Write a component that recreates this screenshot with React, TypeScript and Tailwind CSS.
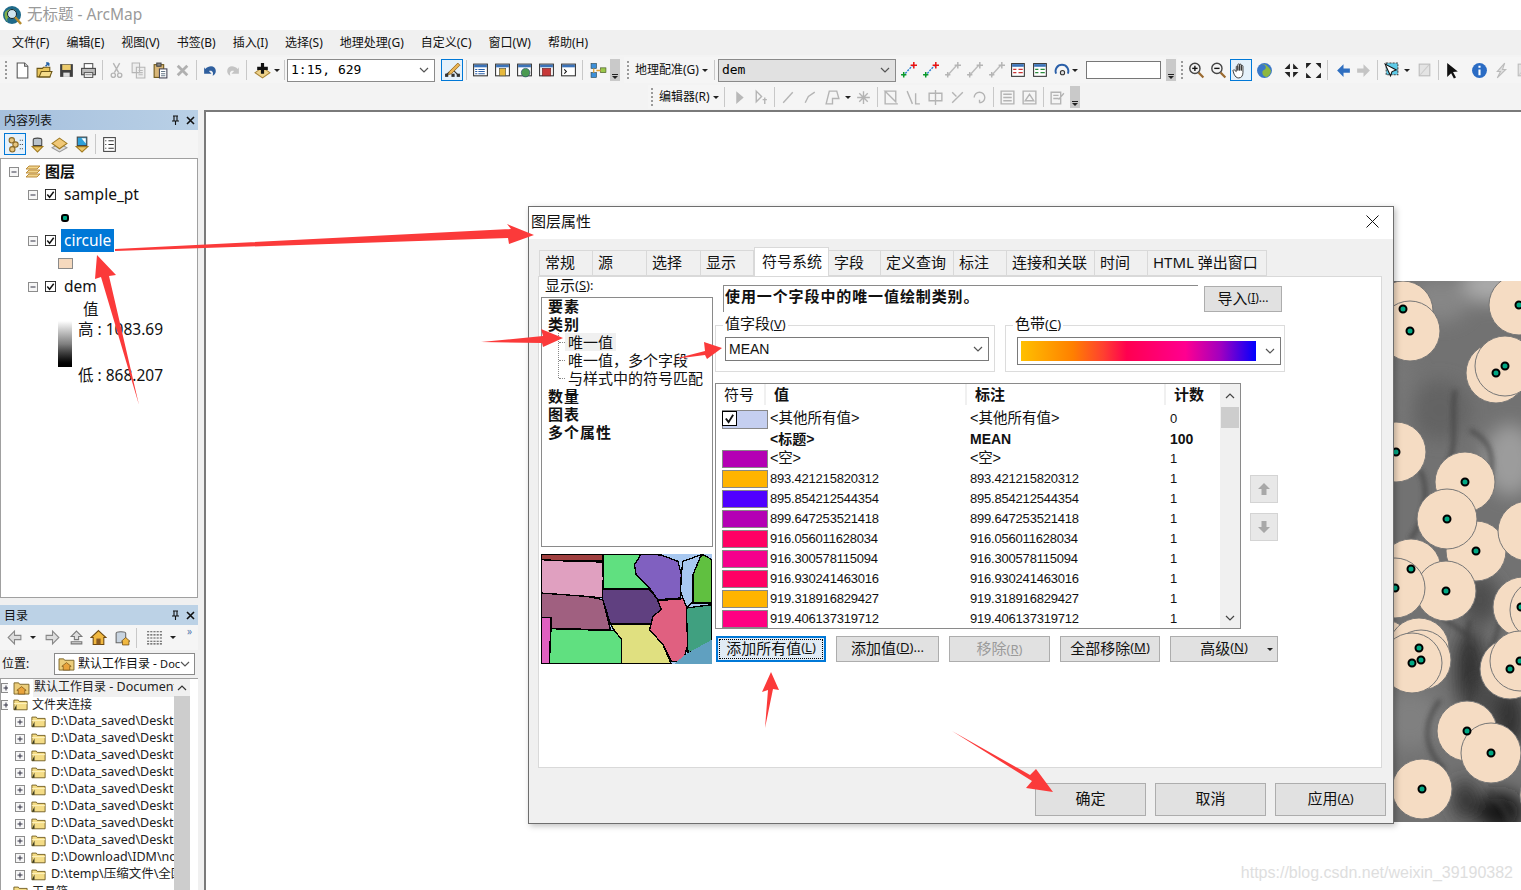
import React from 'react';

const Ico = ({ children }: { children: React.ReactNode }) => (
  <svg width="17" height="17" viewBox="0 0 16 16" className="shrink-0">
    {children}
  </svg>
);

const Slot = ({ children, on }: { children: React.ReactNode; on?: boolean }) => (
  <div
    className={`flex h-[22px] w-[22px] shrink-0 items-center justify-center ${
      on ? 'border-[1.5px] border-[#0078d7] bg-[#e5f1fb]' : ''
    }`}
  >
    {children}
  </div>
);

const Sep = () => (
  <div className="flex w-[6px] shrink-0 justify-center">
    <div className="h-[20px] w-px bg-[#c8c8c8]" />
  </div>
);

const Grip = () => (
  <div className="mx-[3px] h-[18px] w-[2px] shrink-0 border-l-2 border-dotted border-[#9a9a9a]" />
);

const Caret = () => <div className="ml-[1px] h-0 w-0 shrink-0 border-x-[3px] border-t-[3px] border-x-transparent border-t-[#222]" />;

const Handle = () => (
  <div className="flex h-[22px] w-[10px] shrink-0 flex-col items-center justify-end bg-[#c9c9c9] pb-[2px]">
    <div className="mb-[1px] h-px w-[6px] bg-[#222]" />
    <div className="h-0 w-0 border-x-[3px] border-t-[3px] border-x-transparent border-t-[#222]" />
  </div>
);

const Chev = ({ up, cls = 'text-[#555]' }: { up?: boolean; cls?: string }) => (
  <svg width="10" height="6" viewBox="0 0 10 6" className={cls}>
    <path d={up ? 'M1 5l4-4 4 4' : 'M1 1l4 4 4-4'} fill="none" stroke="currentColor" strokeWidth="1.2" />
  </svg>
);

// toolbar glyphs
const NewDoc = () => <Ico><path d="M3 1h7l3 3v11H3z" fill="#fff" stroke="#555" /><path d="M10 1v3h3" fill="#ddd" stroke="#555" /></Ico>;
const OpenF = () => <Ico><path d="M1 6h5l1-1h6v9H1z" fill="#e9c65c" stroke="#6b5516" /><path d="M3 14l2-5h10l-2 5z" fill="#f5dc8a" stroke="#6b5516" /><path d="M9 4l3-3m0 0v2.500m0-2.500H9.500" stroke="#2563a8" strokeWidth="1.400" fill="none" /></Ico>;
const Save = () => <Ico><rect x="2" y="2" width="12" height="12" fill="#3f3f3f" /><rect x="4" y="2.500" width="8" height="5" fill="#eccb6c" /><rect x="5" y="10" width="6" height="4" fill="#ddd" /></Ico>;
const Print = () => <Ico><rect x="4" y="1.500" width="8" height="5" fill="#fff" stroke="#555" /><rect x="1.500" y="6" width="13" height="6" fill="#bbb" stroke="#444" /><rect x="4" y="10" width="8" height="4.500" fill="#fff" stroke="#555" /><path d="M5 12h6" stroke="#888" /></Ico>;
const Cut = () => <Ico><path d="M5 1l5 9M11 1L6 10" stroke="#b5b5b5" strokeWidth="1.300" /><circle cx="5" cy="12.500" r="2" fill="none" stroke="#b5b5b5" strokeWidth="1.300" /><circle cx="11" cy="12.500" r="2" fill="none" stroke="#b5b5b5" strokeWidth="1.300" /></Ico>;
const Copy = () => <Ico><path d="M2 1h7v9H2zM6 5h8v10H6z" fill="#eee" stroke="#b5b5b5" /><path d="M8 8h4M8 10h4M8 12h4" stroke="#bbb" /></Ico>;
const Paste = () => <Ico><rect x="2" y="2.500" width="9" height="12" fill="#d8b678" stroke="#6b5516" /><rect x="4.500" y="1" width="4" height="3" fill="#888" stroke="#444" /><rect x="7" y="6.500" width="7" height="8.500" fill="#fff" stroke="#445" /><path d="M8.500 9h4M8.500 11h4M8.500 13h4" stroke="#678" /></Ico>;
const Del = () => <Ico><path d="M3.500 3.500l9 9m0-9l-9 9" stroke="#b0b0b0" strokeWidth="2.600" /></Ico>;
const Undo = () => <Ico><path d="M3 6.500c4-4 10-3 10 2 0 2-1 3.500-3 4.500 1-3 0-5.500-3.500-4.500L9 11H2V5z" fill="#2f5f9e" /></Ico>;
const Redo = () => <Ico><path d="M13 6.500c-4-4-10-3-10 2 0 2 1 3.500 3 4.500-1-3 0-5.500 3.500-4.500L7 11h7V5z" fill="#c4c4c4" /></Ico>;
const AddData = () => <Ico><path d="M8 5l7 5-7 5-7-5z" fill="#eed28a" stroke="#a8853a" /><path d="M6.500 1h3v3.500H13v3H9.500V11h-3V7.500H3v-3h3.500z" fill="#111" /></Ico>;
const EditTool = () => <Ico><path d="M2 12l6-5 5 5" fill="none" stroke="#333" /><rect x="1" y="11" width="3" height="3" fill="#333" /><rect x="7" y="11" width="3" height="3" fill="#333" /><rect x="12" y="11" width="3" height="3" fill="#333" /><path d="M5 9l8-8 2 2-8 8-3 1z" fill="#e9b454" stroke="#8a5a14" strokeWidth=".7" /></Ico>;
const Win = ({ children }: { children?: React.ReactNode }) => <Ico><rect x="1.500" y="2" width="13" height="11" fill="#fff" stroke="#333" /><rect x="2" y="2.500" width="12" height="2.500" fill="#3b73b9" />{children}</Ico>;
const Model = () => <Ico><rect x="1" y="1.500" width="5" height="4.500" fill="#3d8fd8" stroke="#245" strokeWidth=".6" /><rect x="1" y="10" width="5" height="4.500" fill="#3d8fd8" stroke="#245" strokeWidth=".6" /><rect x="10" y="5.500" width="5" height="4.500" fill="#9ac84a" stroke="#452" strokeWidth=".6" /><path d="M3.500 6v4M6 8h4" stroke="#e0a030" strokeWidth="1.200" /></Ico>;
const GeoA = ({ gray }: { gray?: boolean }) => <Ico><path d="M3 13L12 3" stroke={gray ? '#bbb' : '#2a7fd0'} strokeWidth="1.300" strokeDasharray={gray ? '0' : '2 1'} /><path d="M1 12h5M3.500 9.500v5" stroke={gray ? '#b5b5b5' : '#0a9a2a'} strokeWidth="1.400" /><path d="M10 3h6M13 0v6" stroke={gray ? '#b5b5b5' : '#e81010'} strokeWidth="1.400" /></Ico>;
const ZoomGlass = ({ minus }: { minus?: boolean }) => <Ico><circle cx="6.500" cy="6" r="4.800" fill="#f4f4f4" stroke="#444" strokeWidth="1.300" /><path d="M4 6h5" stroke="#111" strokeWidth="1.300" />{!minus && <path d="M6.500 3.500v5" stroke="#111" strokeWidth="1.300" />}<path d="M10 10l4.500 4.500" stroke="#9a6a30" strokeWidth="2" /></Ico>;
const Hand = () => <Ico><path d="M4 9V4.500c0-1 1.500-1 1.500 0V8 2.500c0-1 1.700-1 1.700 0V8 2.800c0-1 1.600-1 1.600 0V8 4c0-1 1.500-1 1.500 0v6c0 3-1.500 5-4 5-2 0-3-1-4.300-3.500L1 8.500c-.4-1 .9-1.500 1.500-.8z" fill="#fff" stroke="#333" strokeWidth=".9" /></Ico>;
const Globe = () => <Ico><circle cx="8" cy="8" r="7" fill="#3a78c8" /><path d="M5 2c3 0 5 2 4 4s-3 1-3 4 3 4 4 4c3-1 4-4 4-6-2-4-6-7-9-6z" fill="#8eb83f" /></Ico>;
const Corners = ({ out }: { out?: boolean }) => (
  <Ico>
    {(out
      ? ['M1 1h5L1 6z', 'M15 1h-5l5 5z', 'M1 15h5L1 10z', 'M15 15h-5l5-5z']
      : ['M6.500 6.500h-5l5-5z', 'M9.500 6.500h5l-5-5z', 'M6.500 9.500h-5l5 5z', 'M9.500 9.500h5l-5 5z']
    ).map((d) => (
      <path key={d} d={d} fill="#222" />
    ))}
  </Ico>
);
const ArrowB = ({ right }: { right?: boolean }) => <Ico><path d={right ? 'M2 6h6V2l6 6-6 6v-4H2z' : 'M14 6H8V2L2 8l6 6v-4h6z'} fill={right ? '#c4c4c4' : '#2f6fc0'} /></Ico>;
const SelectF = () => <Ico><path d="M3 1h11v11H3z" fill="#5ecbe8" stroke="#444" strokeDasharray="2 1" /><path d="M2 2l5 11 1.500-4 4-1.500z" fill="#fff" stroke="#111" /></Ico>;
const GrayBox = () => <Ico><rect x="3" y="2" width="10" height="11" fill="#e4e4e4" stroke="#bbb" /><path d="M4 12l8-9" stroke="#ccc" /></Ico>;
const Pointer = () => <Ico><path d="M3 1l10 8-4.500.5 2.800 5-2 1-2.600-5L3 14z" fill="#111" /></Ico>;
const Info = () => <Ico><circle cx="8" cy="8" r="7" fill="#2b6cc4" /><path d="M8 3.500v2M8 7v5.500" stroke="#fff" strokeWidth="2" /></Ico>;
const Bolt = () => <Ico><path d="M11 1L4 9h3l-3 6 8-8H9z" fill="#e0e0e0" stroke="#bbb" /></Ico>;
const Gline = ({ d }: { d: string }) => <Ico><path d={d} fill="none" stroke="#b4b4b4" strokeWidth="1.300" /></Ico>;
const Pt = () => <Ico><path d="M4 2l7 6-7 6z" fill="#b8b8b8" /></Ico>;

const GeoTable = ({ c }: { c: string }) => <Ico><rect x="1.500" y="1.500" width="12" height="12" fill="#fff" stroke="#333" /><rect x="2" y="2" width="11" height="2.500" fill="#3b73b9" /><path d="M3 7h3M8 7h4M3 10h3M8 10h4" stroke={c} strokeWidth="1.200" /></Ico>;

const ComboBox = ({ w, bg, text }: { w: string; bg: string; text: string }) => (
  <div className={`flex h-[23px] shrink-0 items-center justify-between border border-[#8a8a8a] pl-[3px] pr-[5px] ${w} ${bg}`}>
    <span className="font-['DejaVu_Sans_Mono',monospace] text-[13px] text-black">{text}</span>
    <Chev />
  </div>
);

const menus = ['文件(F)', '编辑(E)', '视图(V)', '书签(B)', '插入(I)', '选择(S)', '地理处理(G)', '自定义(C)', '窗口(W)', '帮助(H)'];

const Minus = ({ plus }: { plus?: boolean }) => (
  <svg width="10" height="10" viewBox="0 0 10 10" className="shrink-0">
    <rect x=".5" y=".5" width="9" height="9" fill="#f6f6f6" stroke="#8c8c8c" />
    <path d="M2.500 5h5" stroke="#334" />
    {plus && <path d="M5 2.500v5" stroke="#334" />}
  </svg>
);

const Check = () => (
  <svg width="11" height="11" viewBox="0 0 12 12" className="shrink-0">
    <rect x=".5" y=".5" width="11" height="11" fill="#fff" stroke="#222" />
    <path d="M2.500 6l2.500 3 4.500-6" fill="none" stroke="#111" strokeWidth="1.600" />
  </svg>
);

const Folder = () => (
  <svg width="15" height="13" viewBox="0 0 17 14" className="shrink-0">
    <path d="M1 2h5l1 1.500h9V13H1z" fill="#f4dc86" stroke="#6e5a1c" />
    <path d="M1 6h15" stroke="#fff6c8" />
    <path d="M1 13l3-6v6z" fill="#3a3a20" />
  </svg>
);

const HomeFolder = () => (
  <svg width="17" height="14" viewBox="0 0 18 15" className="shrink-0">
    <path d="M1 2h5l1 1.500h10V14H1z" fill="#eccd7a" stroke="#7a6428" />
    <path d="M9 6l5 4h-1.500v4h-7v-4H4z" fill="#e9a33c" stroke="#6e4a10" strokeWidth=".7" />
  </svg>
);

const catalog = [
  'D:\\Data_saved\\Desktop',
  'D:\\Data_saved\\Desktop',
  'D:\\Data_saved\\Desktop',
  'D:\\Data_saved\\Desktop',
  'D:\\Data_saved\\Desktop',
  'D:\\Data_saved\\Desktop',
  'D:\\Data_saved\\Desktop',
  'D:\\Data_saved\\Desktop',
  'D:\\Download\\IDM\\noa',
  'D:\\temp\\压缩文件\\全国',
];

const PanelHead = ({ title, cls }: { title: string; cls: string }) => (
  <div className={`flex h-[20px] shrink-0 items-center justify-between pl-[4px] pr-[3px] pt-px text-[12px] text-[#111] ${cls}`}>
    <span>{title}</span>
    <div className="flex items-center gap-[6px]">
      <svg width="9" height="11" viewBox="0 0 9 11"><path d="M2 1h5M3 1v5M6 1v5M1 6h7M4.500 6v4" stroke="#111" strokeWidth="1.100" fill="none" /></svg>
      <svg width="9" height="9" viewBox="0 0 9 9"><path d="M1 1l7 7M8 1L1 8" stroke="#111" strokeWidth="1.600" /></svg>
    </div>
  </div>
);

const Toc = () => (
  <div className="flex h-[440px] shrink-0 flex-col border border-[#a0a0a0] bg-white pt-[1px] text-[15.5px] text-[#111]">
    <div className="flex h-[23px] items-center pl-[8px]">
      <Minus />
      <svg width="16" height="14" viewBox="0 0 16 14" className="ml-[6px]">
        <path d="M4 1h11l-3 3H1zM4 5h11l-3 3H1zM4 9h11l-3 3H1z" fill="#f0d48e" stroke="#b5842e" strokeWidth=".9" />
      </svg>
      <span className="ml-[4px] text-[15px] font-bold">图层</span>
    </div>
    <div className="flex h-[23px] items-center pl-[27px]">
      <Minus />
      <div className="ml-[7px]"><Check /></div>
      <span className="ml-[8px]">sample_pt</span>
    </div>
    <div className="flex h-[23px] items-center pl-[60px]">
      <div className="h-[8px] w-[8px] rounded-[3px] border-2 border-black bg-[#00a884]" />
    </div>
    <div className="flex h-[23px] items-center pl-[27px]">
      <Minus />
      <div className="ml-[7px]"><Check /></div>
      <span className="ml-[5px] flex h-[23px] items-center bg-[#0078d7] px-[3px] text-white">circule</span>
    </div>
    <div className="flex h-[23px] items-center pl-[57px]">
      <div className="h-[11px] w-[15px] border border-[#8a8a8a] bg-[#f5d9be]" />
    </div>
    <div className="flex h-[23px] items-center pl-[27px]">
      <Minus />
      <div className="ml-[7px]"><Check /></div>
      <span className="ml-[8px]">dem</span>
    </div>
    <div className="flex h-[23px] items-center pl-[82px]">值</div>
    <div className="-mt-[2px] flex pl-[57px]">
      <div className="mt-[2px] h-[46px] w-[14px] bg-gradient-to-b from-white via-[#808080] to-black" />
      <div className="ml-[6px] flex h-[66px] flex-col justify-between">
        <span className="leading-[20px]">高 : 1083.69</span>
        <span className="leading-[20px]">低 : 868.207</span>
      </div>
    </div>
  </div>
);

const Catalog = () => (
  <div className="relative flex min-h-0 flex-1 border-l border-t border-[#a0a0a0] bg-white text-[12.5px] text-[#222]">
    <div className="w-[173px] shrink-0 overflow-hidden">
      <div className="flex h-[17px] items-center whitespace-nowrap">
        <div className="w-[7px] shrink-0 overflow-hidden"><Minus plus /></div>
        <div className="ml-[5px]"><HomeFolder /></div>
        <span className="ml-[3px] bg-[#f0f0f0] pl-[1px]"><span className="text-[12px]">默认工作目录</span> - Documents</span>
      </div>
      <div className="flex h-[17px] items-center whitespace-nowrap">
        <div className="w-[7px] shrink-0 overflow-hidden"><Minus plus /></div>
        <div className="ml-[5px]"><Folder /></div>
        <span className="ml-[4px] text-[12px]">文件夹连接</span>
      </div>
      {catalog.map((c, i) => (
        <div key={i} className="flex h-[17px] items-center whitespace-nowrap pl-[14px]">
          <Minus plus />
          <div className="ml-[6px]"><Folder /></div>
          <span className="ml-[5px]">{c}</span>
        </div>
      ))}
      <div className="flex h-[17px] items-center whitespace-nowrap pl-[12px]">
        <Folder />
        <span className="ml-[4px] text-[12px]">工具箱</span>
      </div>
    </div>
    <div className="flex h-full w-[16px] shrink-0 flex-col bg-[#cdcdcd]">
      <div className="flex h-[17px] items-center justify-center bg-[#f0f0f0]"><Chev up cls="text-[#333]" /></div>
    </div>
  </div>
);

const Left = () => (
  <div className="flex w-[198px] shrink-0 flex-col">
    <PanelHead title="内容列表" cls="bg-gradient-to-r from-[#a6c0dd] to-[#b9d0e6]" />
    <div className="flex h-[28px] shrink-0 items-center bg-[#f5f5f5] pl-[4px]">
      <Slot on>
        <Ico><circle cx="4.500" cy="4" r="2.500" fill="#e7c57e" stroke="#8a6a28" /><circle cx="8" cy="8" r="2.500" fill="#e7c57e" stroke="#8a6a28" /><circle cx="5" cy="12.500" r="2.500" fill="#e7c57e" stroke="#8a6a28" /><path d="M12 4h3M12 8h3M12 12h3" stroke="#444" strokeDasharray="1 1" /></Ico>
      </Slot>
      <Slot><Ico><path d="M4 3.500c0-2 8-2 8 0V9H4z" fill="#b8c2cc" stroke="#444" /><path d="M3 10h10l-5 5z" fill="#eec86a" stroke="#a07a20" /></Ico></Slot>
      <Slot><Ico><path d="M8 7l7 4-7 4-7-4z" fill="#ddd" stroke="#999" /><path d="M8 2l7 5-7 5-7-5z" fill="#f0c878" stroke="#a07a20" /></Ico></Slot>
      <Slot><Ico><rect x="4" y="1" width="9" height="8" fill="#2ea0d8" stroke="#444" /><path d="M8 2h4v5z" fill="#fff" /><path d="M3 10h11l-5.500 5z" fill="#eec86a" stroke="#a07a20" /></Ico></Slot>
      <Sep />
      <Slot><Ico><rect x="2.500" y="1.500" width="11" height="13" fill="#fff" stroke="#444" /><path d="M4 4.500h1M7 4.500h5M4 8h1M7 8h5M4 11.500h1M7 11.500h5" stroke="#333" /></Ico></Slot>
    </div>
    <Toc />
    <div className="mt-[7px]"><PanelHead title="目录" cls="bg-[#bcd2e6]" /></div>
    <div className="flex h-[25px] shrink-0 items-center bg-[#f5f5f5] pl-[3px]">
      <Slot><Ico><path d="M14 6H8V2L2 8l6 6v-4h6z" fill="#ddd" stroke="#888" /></Ico></Slot>
      <div className="ml-[4px]"><Caret /></div>
      <div className="ml-[5px]"><Slot><Ico><path d="M2 6h6V2l6 6-6 6v-4H2z" fill="#ddd" stroke="#888" /></Ico></Slot></div>
      <div className="ml-[2px]"><Slot><Ico><path d="M8 2l5 5h-3v3H6V7H3zM3 12h10v2H3z" fill="#ddd" stroke="#777" /></Ico></Slot></div>
      <Slot><Ico><path d="M8 1.500l7 6.500h-2v6.500H3V8H1z" fill="#f0b840" stroke="#6e4a10" /><rect x="6" y="9" width="4" height="5.500" fill="#8a5a20" /></Ico></Slot>
      <div className="ml-[2px]"><Slot><Ico><path d="M2 4c0-2 9-2 9 0v9H2z" fill="#c8d4e0" stroke="#666" /><path d="M11 8l4 3.500h-1V15H8v-3.500H7z" fill="#f0b840" stroke="#6e4a10" strokeWidth=".7" /></Ico></Slot></div>
      <Sep />
      <div className="ml-[4px]"><Slot><Ico><path d="M1 2.500h14M1 5.500h14M1 8.500h14M1 11.500h14M1 14h14" stroke="#555" strokeDasharray="2 1" /></Ico></Slot></div>
      <div className="ml-[4px]"><Caret /></div>
      <span className="ml-[11px] self-start text-[10px] leading-[12px] text-[#5a7db0]">»</span>
    </div>
    <div className="flex h-[28px] shrink-0 items-center pl-[2px] pr-[3px] text-[12px] text-[#111]">
      <span className="w-[52px] shrink-0">位置:</span>
      <div className="flex h-[22px] flex-1 items-center justify-between border border-[#8a8a8a] bg-white pl-[3px] pr-[4px]">
        <div className="flex min-w-0 items-center gap-[3px] overflow-hidden whitespace-nowrap">
          <HomeFolder />
          <span>默认工作目录 - <span className="text-[11px]">Doc</span></span>
        </div>
        <Chev />
      </div>
    </div>
    <Catalog />
  </div>
);

const Gap = ({ w }: { w: string }) => <div className={`shrink-0 ${w}`} />;

const Toolbars = () => (
  <div className="h-[55px] shrink-0 bg-[#f3f3f3] pt-[2px]">
    <div className="flex h-[26px] items-center">
      <div className="flex h-[26px] shrink-0 items-center bg-[#f5f5f5] pl-[2px]">
        <Grip />
        <Gap w="w-px" />
        <Slot><NewDoc /></Slot><Slot><OpenF /></Slot><Slot><Save /></Slot><Slot><Print /></Slot>
        <Sep />
        <Slot><Cut /></Slot><Slot><Copy /></Slot><Slot><Paste /></Slot><Slot><Del /></Slot>
        <Sep />
        <Slot><Undo /></Slot><Slot><Redo /></Slot>
        <Sep />
        <Gap w="w-[2px]" />
        <Slot><AddData /></Slot>
        <Caret />
        <Gap w="w-px" />
        <Sep />
        <ComboBox w="w-[148px]" bg="bg-white" text="1:15, 629" />
        <Gap w="w-[6px]" />
        <Slot on><EditTool /></Slot>
        <Sep />
        <Slot><Win><path d="M3 7h2M6 7h6M3 9h2M6 9h6M3 11h2M6 11h6" stroke="#2a5fa8" /></Win></Slot>
        <Slot><Win><rect x="5" y="6" width="6" height="7" fill="#e6b83c" stroke="#554" strokeWidth=".6" /></Win></Slot>
        <Slot><Win><circle cx="9" cy="10" r="4" fill="#4a9a50" stroke="#246" strokeWidth=".6" /></Win></Slot>
        <Slot><Win><rect x="4" y="6" width="8" height="7" fill="#c83838" stroke="#622" strokeWidth=".6" /></Win></Slot>
        <Slot><Win><path d="M4 7l2 2-2 2" stroke="#111" fill="none" /></Win></Slot>
        <Sep />
        <Gap w="w-[2px]" />
        <Slot><Model /></Slot>
        <Gap w="w-px" />
      </div>
      <Handle />
      <div className="ml-[4px] flex h-[26px] shrink-0 items-center bg-[#f5f5f5]">
        <Grip />
        <span className="ml-[3px] whitespace-nowrap text-[12px] text-[#111]">地理配准(G)</span>
        <div className="ml-[2px]"><Caret /></div>
        <Gap w="w-[4px]" />
        <Sep />
        <ComboBox w="w-[178px]" bg="bg-[#e1e1e1]" text="dem" />
        <Gap w="w-[2px]" />
        <Slot><GeoA /></Slot>
        <Slot><GeoA /></Slot>
        <Slot><GeoA gray /></Slot>
        <Slot><GeoA gray /></Slot>
        <Slot><GeoA gray /></Slot>
        <Slot><GeoTable c="#c33" /></Slot>
        <Slot><GeoTable c="#2a8a3a" /></Slot>
        <Slot><Ico><path d="M2 11a6 6 0 1 1 11 0" fill="none" stroke="#2a5fa8" strokeWidth="1.800" /><circle cx="8" cy="10" r="2" fill="#ddd" stroke="#333" /></Ico></Slot>
        <div className="-ml-[3px]"><Caret /></div>
        <div className="ml-[8px] h-[18px] w-[75px] shrink-0 border border-[#777] bg-white" />
        <Gap w="w-[5px]" />
      </div>
      <Handle />
      <div className="ml-[1px] flex h-[26px] min-w-0 flex-1 items-center overflow-hidden bg-[#f5f5f5]">
        <Gap w="w-px" />
        <Grip />
        <Slot><ZoomGlass /></Slot><Slot><ZoomGlass minus /></Slot><Slot on><Hand /></Slot>
        <Gap w="w-[2px]" />
        <Slot><Globe /></Slot>
        <Gap w="w-[5px]" />
        <Slot><Corners /></Slot><Slot><Corners out /></Slot>
        <Sep />
        <Gap w="w-[2px]" />
        <Slot><ArrowB /></Slot>
        <div className="-ml-[2px]"><Slot><ArrowB right /></Slot></div>
        <Sep />
        <Slot><SelectF /></Slot>
        <Caret />
        <Gap w="w-[4px]" />
        <Slot><GrayBox /></Slot>
        <Sep />
        <Slot><Pointer /></Slot>
        <Gap w="w-[5px]" />
        <Slot><Info /></Slot><Slot><Bolt /></Slot><Slot><GrayBox /></Slot>
      </div>
    </div>
    <div className="mt-[2px] flex h-[24px] items-center pl-[648px]">
      <div className="flex h-[24px] items-center bg-[#f5f5f5]">
        <Grip />
        <span className="ml-[3px] whitespace-nowrap text-[12px] text-[#111]">编辑器(R)</span>
        <div className="ml-[2px]"><Caret /></div>
        <Gap w="w-[3px]" />
        <Sep />
        <Gap w="w-[2px]" />
        <Slot><Pt /></Slot>
        <div className="-ml-[2px]"><Slot><Gline d="M4 2l5 5-5 5zM10 10h4M12 8v6" /></Slot></div>
        <Sep />
        <Slot><Gline d="M3 13L12 3" /></Slot>
        <Slot><Gline d="M3 13l3-6 6-4" /></Slot>
        <Slot><Gline d="M5 2h7l2 7H8v5H2z" /></Slot>
        <Caret />
        <Gap w="w-[2px]" />
        <Slot><Gline d="M8 2v12M2 8h12M4 4l8 8M12 4l-8 8" /></Slot>
        <Sep />
        <Slot><Gline d="M2 2h10v10L2 2zM2 2v12h12" /></Slot>
        <Slot><Gline d="M2 2l5 12M10 4v10h4" /></Slot>
        <Slot><Gline d="M2 4h12v7H2zM8 1v14" /></Slot>
        <Slot><Gline d="M3 13L13 3M3 3l4 4" /></Slot>
        <Slot><Gline d="M3 8a5 5 0 1 1 5 5M8 13v-3" /></Slot>
        <Sep />
        <Slot><Gline d="M2 2h12v12H2zM4 5h8M4 8h8M4 11h8" /></Slot>
        <Slot><Gline d="M2 2h12v12H2zM4 11l4-6 4 6z" /></Slot>
        <Sep />
        <Slot><Gline d="M2 3h9v11H2zM4 6h5M4 9h5M9 10l5-6" /></Slot>
        <Gap w="w-px" />
      </div>
      <Handle />
    </div>
  </div>
);

const circles: [number, number][] = [
  [1403, 311], [1410, 331], [1519, 305], [1496, 373], [1505, 366], [1396, 452], [1465, 482], [1476, 551],
  [1447, 519], [1528, 531], [1411, 569], [1446, 591], [1395, 588], [1523, 607], [1540, 610], [1380, 648],
  [1384, 650], [1419, 648], [1421, 660], [1412, 663], [1510, 669], [1520, 661], [1467, 731], [1491, 753],
  [1422, 789], [1550, 795],
];

const points: [number, number][] = [
  [1403, 309], [1410, 331], [1519, 305], [1496, 373], [1505, 366], [1396, 452], [1465, 482], [1476, 551],
  [1447, 519], [1411, 569], [1395, 588], [1446, 591], [1521, 607], [1419, 648], [1421, 660], [1412, 663],
  [1510, 669], [1520, 661], [1467, 731], [1491, 753], [1422, 789],
];

const blobs: [number, number, number, number, string][] = [
  [1490, 285, 30, 18, '#aaaaaa'], [1440, 300, 30, 22, '#868686'], [1510, 460, 26, 36, '#9c9c9c'], [1440, 410, 30, 30, '#636363'],
  [1400, 390, 14, 50, '#777777'], [1480, 600, 20, 25, '#4e4e4e'], [1470, 670, 14, 40, '#2e2e2e'], [1410, 720, 30, 30, '#808080'],
  [1500, 812, 24, 20, '#141414'], [1465, 800, 12, 20, '#303030'], [1490, 700, 20, 20, '#4e4e4e'], [1510, 720, 16, 30, '#303030'],
];

const ridges = [
  'M1455 390C1450 420 1460 445 1445 470',
  'M1470 430C1490 440 1495 455 1490 480',
  'M1420 470C1430 490 1425 520 1410 540',
  'M1470 620C1462 650 1478 680 1468 705',
  'M1430 605C1445 625 1460 625 1470 640',
  'M1440 700C1425 720 1420 745 1445 770',
  'M1500 620C1495 650 1480 660 1475 680',
  'M1490 790C1495 800 1505 805 1510 822',
];

const MapLayer = () => (
  <svg className="absolute left-[1186px] top-[167px]" width="129" height="543" viewBox="1392 279 129 543">
    <defs>
      <filter id="soft" x="-50%" y="-50%" width="200%" height="200%"><feGaussianBlur stdDeviation="9" /></filter>
      <filter id="ridge" x="-50%" y="-50%" width="200%" height="200%"><feGaussianBlur stdDeviation="2.500" /></filter>
      <clipPath id="frame"><rect x="1392" y="281" width="129" height="541" /></clipPath>
    </defs>
    <g clipPath="url(#frame)">
      <rect x="1392" y="281" width="129" height="541" fill="#727272" />
      <g filter="url(#soft)">
        {blobs.map(([x, y, rx, ry, f], i) => (
          <ellipse key={i} cx={x} cy={y} rx={rx} ry={ry} fill={f} />
        ))}
      </g>
      <g filter="url(#ridge)" fill="none" stroke="#3a3a3a" strokeWidth="4" opacity=".7">
        {ridges.map((d) => (
          <path key={d} d={d} />
        ))}
      </g>
      {circles.map(([x, y], i) => (
        <circle key={i} cx={x} cy={y} r="30" fill="#f5dcc3" stroke="#767676" strokeWidth="1" />
      ))}
      {points.map(([x, y], i) => (
        <circle key={i} cx={x} cy={y} r="3.500" fill="#00a884" stroke="#000" strokeWidth="2" />
      ))}
    </g>
  </svg>
);

const tabs: [string, string, boolean?][] = [
  ['常规', 'w-[54px]'],
  ['源', 'w-[54px]'],
  ['选择', 'w-[54px]'],
  ['显示', 'w-[53px]'],
  ['符号系统', 'w-[75px]', true],
  ['字段', 'w-[52px]'],
  ['定义查询', 'w-[73px]'],
  ['标注', 'w-[53px]'],
  ['连接和关联', 'w-[88px]'],
  ['时间', 'w-[53px]'],
  ['HTML 弹出窗口', 'w-[119px]'],
];

const rows: [string, string][] = [
  ['#b400b4', '<空>'],
  ['#ffb400', '893.421215820312'],
  ['#5000ff', '895.854212544354'],
  ['#b400b4', '899.647253521418'],
  ['#ff0064', '916.056011628034'],
  ['#f5008c', '916.300578115094'],
  ['#ff0064', '916.930241463016'],
  ['#ffb400', '919.318916829427'],
  ['#ff0082', '919.406137319712'],
];

const Btn = ({ w, h = 'h-[26px]', children, focus }: { w: string; h?: string; children: React.ReactNode; focus?: boolean }) => (
  <div
    className={`flex shrink-0 items-center justify-center ${w} ${h} ${
      focus ? 'border-2 border-[#0078d7] bg-[#e1ebf5]' : 'border border-[#adadad] bg-[#e1e1e1] pb-[2px]'
    } text-[#111]`}
  >
    {focus ? (
      <div className="flex h-[20px] w-[104px] items-center justify-center border border-dotted border-black pb-[2px]">{children}</div>
    ) : (
      children
    )}
  </div>
);

const Preview = () => (
  <svg width="171" height="110" viewBox="20 38 512 330" preserveAspectRatio="none" shapeRendering="crispEdges" className="mt-[7px] block shrink-0">
    <rect x="20" y="38" width="512" height="330" fill="#a8c8f0" />
    <g stroke="#000" strokeWidth="4" strokeLinejoin="round">
      <path d="M20 38h185v20H20z" fill="#a04040" />
      <path d="M20 55l95 5 90 2 3 108-53-5-95-5-40-5z" fill="#e0a0c0" />
      <path d="M205 38h115l-15 32 5 35 35 37H205l3-62z" fill="#60e080" />
      <path d="M320 38l60 3 50 19 10 40-2 70-68 5-25-35-40-40-5-30z" fill="#8060c0" />
      <path d="M505 40l27 15v130h-57l-5-65 5-50z" fill="#60c040" />
      <path d="M445 60l55-20-25 60v80l-20 20-17-50 2-50z" fill="#a8c8f0" />
      <path d="M205 145h140l25 30 10 30-25 20-5 23H228l-23-73z" fill="#604080" />
      <path d="M20 155l135 10 50 10 23 90-178-3v-34H20z" fill="#a06080" />
      <path d="M20 228h30l-5 140H20z" fill="#e060c0" />
      <path d="M50 262l190 6 22 27v73H45z" fill="#60e080" />
      <path d="M228 248h122l-5 17 40 45 25 58H262v-73l-22-27z" fill="#e0e080" />
      <path d="M370 178l75-6 13 28 2 110-15 50h-35l-25-50-40-45 10-40 25-20z" fill="#e06080" />
      <path d="M455 200l77-10v105l-32 25-40 15z" fill="#40a080" />
    </g>
    <path d="M460 335l72-40v73H420l25-23z" fill="#60a0c0" />
  </svg>
);

const Dialog = () => (
  <div className="absolute left-[322px] top-[94px] flex h-[618px] w-[866px] flex-col border border-[#6e6e6e] bg-[#f0f0f0] text-[15px] text-[#111] shadow-[2px_2px_6px_rgba(0,0,0,0.25)]">
    <div className="flex h-[32px] shrink-0 items-center justify-between bg-white pb-[4px] pl-[2px] pr-[14px]">
      <span>图层属性</span>
      <svg width="13" height="13" viewBox="0 0 13 13"><path d="M.5.5l12 12m0-12l-12 12" stroke="#111" /></svg>
    </div>
    <div className="flex flex-1 flex-col pl-[10px] pr-[7px] pt-[11px]">
      <div className="flex h-[26px] shrink-0 items-end">
        {tabs.map(([t, w, on]) => (
          <div
            key={t}
            className={`flex shrink-0 items-center border border-[#d9d9d9] pb-[2px] pl-[5px] whitespace-nowrap ${w} ${
              on ? 'relative z-10 h-[29px] border-b-0 bg-white pl-[7px]' : 'h-[26px] border-l-0 first:border-l bg-[#f0f0f0]'
            }`}
          >
            {t}
          </div>
        ))}
      </div>
      <div className="-ml-px flex h-[492px] w-[844px] shrink-0 items-start gap-[2px] border border-[#d9d9d9] bg-white pl-[2px]">
        <div className="flex w-[172px] shrink-0 flex-col">
          <div className="flex h-[20px] items-center pb-[3px] pl-[4px]">显示<span className="text-[13px]">(<u>S</u>):</span></div>
          <div className="flex h-[250px] flex-col border border-[#8a8a8a] pl-[6px] leading-[18px]">
            <span className="-mt-px h-[18px] font-bold tracking-[1px]">要素</span>
            <span className="h-[18px] font-bold tracking-[1px]">类别</span>
            <div className="relative">
              <div className="absolute left-[10px] top-0 h-[45px] border-l border-dotted border-[#888]" />
              {[
                ['唯一值', true],
                ['唯一值，多个字段', false],
                ['与样式中的符号匹配', false],
              ].map(([t, sel]) => (
                <div key={t as string} className="flex h-[18px] items-center pl-[11px]">
                  <div className="h-0 w-[6px] shrink-0 border-t border-dotted border-[#888]" />
                  <span className={`whitespace-nowrap px-[3px] ${sel ? 'bg-[#f0f0f0]' : ''}`}>{t}</span>
                </div>
              ))}
            </div>
            <span className="h-[18px] font-bold tracking-[1px]">数量</span>
            <span className="h-[18px] font-bold tracking-[1px]">图表</span>
            <span className="h-[18px] font-bold tracking-[1px]">多个属性</span>
          </div>
          <Preview />
        </div>
        <div className="flex w-[570px] shrink-0 flex-col pt-[8px]">
          <div className="flex h-[29px] shrink-0 items-start pl-[8px]">
            <div className="h-[29px] w-[475px] border-l border-t border-[#8a8a8a] pl-[1px] pt-px font-bold leading-[18px] tracking-[0.9px]">
              使用一个字段中的唯一值绘制类别。
            </div>
            <div className="ml-[6px] mt-px">
              <Btn w="w-[78px]">导入<span className="text-[12px]">(<u>I</u>)...</span></Btn>
            </div>
          </div>
          <div className="mt-[11px] flex h-[47px] shrink-0 gap-[10px]">
            <div className="relative h-[47px] w-[280px] border border-[#dcdcdc] pl-[9px] pt-[11px]">
              <span className="absolute -top-[14px] left-[7px] bg-white px-[2px]">值字段<span className="text-[13px]">(<u>V</u>)</span></span>
              <div className="flex h-[24px] w-[264px] items-center justify-between border border-[#7a7a7a] bg-white pl-[3px] pr-[5px] font-['Liberation_Sans',sans-serif]">
                <span className="text-[14px]">MEAN</span>
                <Chev />
              </div>
            </div>
            <div className="relative h-[47px] w-[280px] border border-[#dcdcdc] pl-[11px] pt-[11px]">
              <span className="absolute -top-[14px] left-[7px] bg-white px-[2px]">色带<span className="text-[13px]">(<u>C</u>)</span></span>
              <div className="flex h-[28px] w-[264px] items-center justify-between border border-[#7a7a7a] bg-white pl-[3px] pr-[5px]">
                <div className="h-[20px] w-[235px] bg-[linear-gradient(to_right,#ffc000,#ff8000_22%,#ff4030_35%,#ff0050_45%,#ff0090_70%,#a000c0_85%,#0000ff)]" />
                <Chev />
              </div>
            </div>
          </div>
          <div className="mt-[11px] flex items-start">
            <div className="flex h-[246px] w-[526px] shrink-0 border border-[#8a8a8a] font-['Liberation_Sans','Noto_Sans_CJK_SC',sans-serif]">
              <div className="w-[504px] shrink-0 overflow-hidden">
                <div className="flex h-[25px] items-center pb-[4px] font-bold">
                  <div className="h-[21px] w-[50px] border-r-2 border-[#f0f0f0] pl-[8px] font-normal leading-[21px]">符号</div>
                  <div className="h-[21px] w-[201px] border-r-2 border-[#f0f0f0] pl-[8px] leading-[21px]">值</div>
                  <div className="h-[21px] w-[199px] border-r-2 border-[#f0f0f0] pl-[8px] leading-[21px]">标注</div>
                  <div className="w-[54px] pl-[8px] leading-[21px]">计数</div>
                </div>
                <div className="flex h-[20px] items-center text-[13px]">
                  <div className="relative ml-[6px] mr-[2px] h-[19px] w-[46px] border border-[#888] bg-[#c5cff0]">
                    <div className="absolute -left-px top-0 flex h-[15px] w-[15px] items-center justify-center border border-black bg-white">
                      <svg width="11" height="11" viewBox="0 0 12 12"><path d="M2 6l3 4 5-8" fill="none" stroke="#111" strokeWidth="2" /></svg>
                    </div>
                  </div>
                  <div className="w-[200px] text-[14.5px]">&lt;其他所有值&gt;</div>
                  <div className="w-[200px] text-[14.5px]">&lt;其他所有值&gt;</div>
                  <div>0</div>
                </div>
                <div className="flex h-[20px] items-center text-[14px] font-bold">
                  <div className="w-[54px]" />
                  <div className="w-[200px]">&lt;标题&gt;</div>
                  <div className="w-[200px]">MEAN</div>
                  <div>100</div>
                </div>
                {rows.map(([c, v], i) => (
                  <div key={i} className="flex h-[20px] items-center text-[13px]">
                    <div className="ml-[6px] mr-[2px] h-[18px] w-[46px] border border-[#888]" style={{ backgroundColor: c }} />
                    <div className={`w-[200px] tracking-[-0.2px] ${i === 0 ? 'text-[14.5px]' : ''}`}>{v}</div>
                    <div className={`w-[200px] tracking-[-0.2px] ${i === 0 ? 'text-[14.5px]' : ''}`}>{v}</div>
                    <div>1</div>
                  </div>
                ))}
              </div>
              <div className="flex w-[20px] shrink-0 flex-col items-center bg-[#f0f0f0]">
                <div className="flex h-[23px] items-center"><Chev up cls="text-[#444]" /></div>
                <div className="h-[21px] w-[18px] bg-[#cdcdcd]" />
                <div className="flex-1" />
                <div className="flex h-[20px] items-center"><Chev cls="text-[#444]" /></div>
              </div>
            </div>
            <div className="ml-[9px] mt-[92px] flex flex-col gap-[10px]">
              <div className="flex h-[28px] w-[28px] items-center justify-center border border-[#d4d4d4] bg-[#e8e8e8]">
                <svg width="14" height="14" viewBox="0 0 14 14"><path d="M7 1l6 6H9.500v6h-5V7H1z" fill="#a8a8a8" /></svg>
              </div>
              <div className="flex h-[28px] w-[28px] items-center justify-center border border-[#d4d4d4] bg-[#e8e8e8]">
                <svg width="14" height="14" viewBox="0 0 14 14"><path d="M7 13l6-6H9.500V1h-5v6H1z" fill="#a8a8a8" /></svg>
              </div>
            </div>
          </div>
          <div className="mt-[7px] flex gap-[10px] pl-px">
            <Btn w="w-[110px]" focus>添加所有值<span className="text-[13px]">(<u>L</u>)</span></Btn>
            <Btn w="w-[103px]">添加值<span className="text-[13px]">(<u>D</u>)...</span></Btn>
            <Btn w="w-[101px]"><span className="text-[#9a9a9a]">移除<span className="text-[13px]">(<u>R</u>)</span></span></Btn>
            <Btn w="w-[100px]">全部移除<span className="text-[13px]">(<u>M</u>)</span></Btn>
            <div className="relative">
              <Btn w="w-[108px]">高级<span className="text-[13px]">(<u>N</u>)</span></Btn>
              <div className="absolute right-[5px] top-[12px] h-0 w-0 border-x-[3px] border-t-[3px] border-x-transparent border-t-[#222]" />
            </div>
          </div>
        </div>
      </div>
      <div className="flex justify-end gap-[9px] pt-[15px]">
        <Btn w="w-[111px]" h="h-[33px]">确定</Btn>
        <Btn w="w-[111px]" h="h-[33px]">取消</Btn>
        <Btn w="w-[111px]" h="h-[33px]">应用<span className="text-[13px]">(<u>A</u>)</span></Btn>
      </div>
    </div>
  </div>
);

const Arrows = () => (
  <svg className="pointer-events-none absolute left-0 top-0" width="1521" height="890" viewBox="0 0 1521 890" fill="#fb3a3a">
    <path d="M115 249l396-20-4-5 27 11-25 9-1-6-393 13z" />
    <path d="M139 405L109 276l7-1-19-20-2 24 6-2z" />
    <path d="M481 342l62-6 -2-7 22 9-20 9 -1-4z" />
    <path d="M674 359l31-8-1-9 18 6-15 11-2-4z" />
    <path d="M765 728l3-38-6 2 9-20 8 18-6-1z" />
    <path d="M952 731l78 44 6-6 17 23-27-4 6-7z" />
  </svg>
);

const App: React.FC = () => {
  return (
    <div className="relative flex h-[890px] w-[1521px] flex-col overflow-hidden bg-[#f0f0f0] font-['Noto_Sans','Noto_Sans_CJK_SC',sans-serif]">
      <div className="flex h-[30px] shrink-0 items-center bg-white pl-[2px]">
        <svg width="21" height="21" viewBox="0 0 21 21">
          <circle cx="10" cy="10" r="9" fill="#1f6a8a" />
          <path d="M3 7c3-3 8-4 10-2s-1 5-4 6-5 3-3 6C3 15 2 10 3 7z" fill="#7fb04a" />
          <circle cx="10" cy="9" r="4.500" fill="#cfe4ee" stroke="#123" />
          <path d="M13 12l6 7" stroke="#b58a2c" strokeWidth="2.500" />
        </svg>
        <span className="ml-[4px] text-[15.5px] text-[#9a9a9a]">无标题 - ArcMap</span>
      </div>
      <div className="flex h-[25px] shrink-0 items-center gap-[17px] pl-[12px] text-[12px] text-[#111]">
        {menus.map((m) => (
          <span key={m} className="whitespace-nowrap">{m}</span>
        ))}
      </div>
      <Toolbars />
      <div className="flex min-h-0 flex-1">
        <Left />
        <div className="relative ml-[6px] flex-1 border-l-2 border-t-2 border-[#7a7a7a] bg-white">
          <MapLayer />
          <Dialog />
          <div className="absolute bottom-[5px] right-[8px] font-['Liberation_Sans',sans-serif] text-[16px] text-[#dedede]">
            https://blog.csdn.net/weixin_39190382
          </div>
        </div>
      </div>
      <Arrows />
    </div>
  );
};

export default App;
